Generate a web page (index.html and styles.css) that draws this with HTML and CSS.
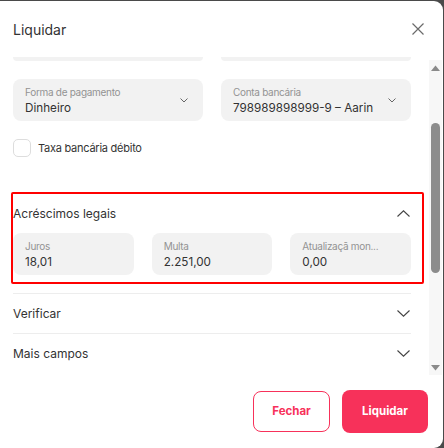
FILE: index.html
```html
<!DOCTYPE html>
<html lang="pt-BR">
<head>
    <meta charset="UTF-8">
    <meta name="viewport" content="width=device-width, initial-scale=1.0">
    <title>Liquidar</title>
    <link rel="stylesheet" href="styles.css">
</head>
<body>
    <div class="modal">
        <div class="modal-header">
            <h2 class="modal-title">Liquidar</h2>
            <button class="close-btn" aria-label="Fechar">
                <svg width="12" height="12" viewBox="0 0 12 12"><path d="M0.5 0.5 L11.5 11.5 M11.5 0.5 L0.5 11.5" stroke="#6b6b6b" stroke-width="1.2" fill="none"/></svg>
            </button>
        </div>

        <div class="modal-body">
            <div class="content">
                <div class="peek">
                    <div class="peek-field"></div>
                    <div class="peek-field"></div>
                </div>

                <div class="row two">
                    <div class="field select">
                        <div class="field-text">
                            <span class="field-label">Forma de pagamento</span>
                            <span class="field-value">Dinheiro</span>
                        </div>
                        <svg class="select-chevron" width="8" height="5" viewBox="0 0 8 5"><path d="M0.5 0.5 L4 4 L7.5 0.5" stroke="#666" stroke-width="1" fill="none"/></svg>
                    </div>
                    <div class="field select">
                        <div class="field-text">
                            <span class="field-label">Conta bancária</span>
                            <span class="field-value">798989898999-9 – Aarin</span>
                        </div>
                        <svg class="select-chevron" width="8" height="5" viewBox="0 0 8 5"><path d="M0.5 0.5 L4 4 L7.5 0.5" stroke="#666" stroke-width="1" fill="none"/></svg>
                    </div>
                </div>

                <label class="checkbox-row">
                    <span class="checkbox"></span>
                    <span class="checkbox-label">Taxa bancária débito</span>
                </label>

                <div class="section highlighted">
                    <div class="section-head">
                        <span class="section-title">Acréscimos legais</span>
                        <svg width="13" height="7" viewBox="0 0 13 7"><path d="M0.5 6.5 L6.5 0.8 L12.5 6.5" stroke="#444" stroke-width="1.1" fill="none"/></svg>
                    </div>
                    <div class="row three">
                        <div class="field">
                            <div class="field-text">
                                <span class="field-label">Juros</span>
                                <span class="field-value">18,01</span>
                            </div>
                        </div>
                        <div class="field">
                            <div class="field-text">
                                <span class="field-label">Multa</span>
                                <span class="field-value">2.251,00</span>
                            </div>
                        </div>
                        <div class="field">
                            <div class="field-text">
                                <span class="field-label">Atualizaçã mon...</span>
                                <span class="field-value">0,00</span>
                            </div>
                        </div>
                    </div>
                </div>

                <div class="accordion">
                    <div class="accordion-item">
                        <span>Verificar</span>
                        <svg width="13" height="7" viewBox="0 0 13 7"><path d="M0.5 0.5 L6.5 6.2 L12.5 0.5" stroke="#444" stroke-width="1.1" fill="none"/></svg>
                    </div>
                    <div class="accordion-item">
                        <span>Mais campos</span>
                        <svg width="13" height="7" viewBox="0 0 13 7"><path d="M0.5 0.5 L6.5 6.2 L12.5 0.5" stroke="#444" stroke-width="1.1" fill="none"/></svg>
                    </div>
                </div>
            </div>

            <div class="scrollbar">
                <svg class="arrow" width="9" height="6" viewBox="0 0 9 6"><path d="M0 6 L4.5 0.5 L9 6 Z" fill="#8a8a8a"/></svg>
                <div class="scroll-track">
                    <div class="scroll-thumb"></div>
                </div>
                <svg class="arrow" width="9" height="6" viewBox="0 0 9 6"><path d="M0 0 L4.5 5.5 L9 0 Z" fill="#8a8a8a"/></svg>
            </div>
        </div>

        <div class="modal-footer">
            <button class="btn btn-outline">Fechar</button>
            <button class="btn btn-primary">Liquidar</button>
        </div>
    </div>
</body>
</html>
```

FILE: styles.css
```css
body {
    margin: 0;
    background-color: #4a4a4a;
    font-family: Inter, "Noto Sans", sans-serif;
    color: #333;
    overflow: hidden;
}
.modal {
    margin-top: 1px;
    width: 443px;
    height: 447px;
    background: #fff;
    border-radius: 0 9px 9px 0;
    display: flex;
    flex-direction: column;
}
.modal-header {
    height: 56px;
    padding: 0 19px 0 13px;
    display: flex;
    align-items: center;
    justify-content: space-between;
    flex-shrink: 0;
}
.modal-title {
    margin: 0;
    font-size: 14px;
    font-weight: 400;
    color: #333;
}
.close-btn {
    background: none;
    border: none;
    padding: 0;
    width: 12px;
    height: 12px;
    display: flex;
}
.modal-body {
    height: 319px;
    display: flex;
    flex-shrink: 0;
}
.content {
    flex: 1;
    padding: 0 18px 0 13px;
    overflow: hidden;
}
.peek {
    display: flex;
    gap: 18px;
    height: 4px;
}
.peek-field {
    flex: 1;
    background: #f2f2f2;
    border-radius: 0 0 8px 8px;
}
.row {
    display: flex;
    gap: 18px;
}
.row.two {
    margin-top: 18px;
}
.field {
    flex: 1;
    height: 42px;
    box-sizing: border-box;
    padding: 7px 12px 0 12px;
    background: #f2f2f2;
    border-radius: 8px;
    display: flex;
    justify-content: space-between;
}
.field.select {
    padding-right: 15px;
}
.field-text {
    display: flex;
    flex-direction: column;
    gap: 2px;
    min-width: 0;
}
.field-label {
    font-size: 10px;
    line-height: 12px;
    color: #929292;
    letter-spacing: -0.3px;
    white-space: nowrap;
}
.field-value {
    font-size: 11.7px;
    line-height: 16px;
    color: #333;
    white-space: nowrap;
}
.select-chevron {
    align-self: center;
    margin-top: -7px;
}
.checkbox-row {
    margin-top: 18px;
    height: 18px;
    display: flex;
    align-items: center;
    gap: 7px;
}
.checkbox {
    width: 16px;
    height: 16px;
    border: 1px solid #ddd;
    border-radius: 5px;
}
.checkbox-label {
    font-size: 11px;
    letter-spacing: -0.25px;
    color: #333;
}
.section {
    margin-top: 35px;
    padding: 1px 0 9px;
    position: relative;
}
.highlighted::after {
    content: "";
    position: absolute;
    top: 0;
    bottom: 0;
    left: -2px;
    right: -13px;
    border: 2px solid #ff0000;
    border-radius: 2px;
    pointer-events: none;
}
.section-head {
    height: 40px;
    display: flex;
    align-items: center;
    justify-content: space-between;
    padding-right: 1px;
}
.section-title {
    font-size: 12px;
    color: #333;
}
.accordion {
    margin-top: 9px;
}
.accordion-item {
    height: 39px;
    border-top: 1px solid #ededed;
    display: flex;
    align-items: center;
    justify-content: space-between;
    font-size: 12px;
    color: #333;
    padding-right: 1px;
}
.scrollbar {
    width: 13px;
    margin: 3px 1px 1px 0;
    background: #f7f7f7;
    display: flex;
    flex-direction: column;
    align-items: center;
}
.arrow {
    margin: 5px 0 4px;
    flex-shrink: 0;
}
.scroll-track {
    flex: 1;
    width: 100%;
    display: flex;
    justify-content: center;
}
.scroll-thumb {
    margin-top: 48px;
    width: 9px;
    height: 150px;
    border-radius: 5px;
    background: #8c8c8c;
}
.modal-footer {
    flex: 1;
    display: flex;
    justify-content: flex-end;
    align-items: center;
    gap: 12px;
    padding: 0 15px 2px 0;
}
.btn {
    font-family: Inter, "Noto Sans", sans-serif;
    font-size: 11.5px;
    font-weight: 700;
    border-radius: 8px;
    cursor: pointer;
}
.btn-outline {
    width: 77px;
    height: 41px;
    background: #fff;
    color: #f7315a;
    border: 1px solid #f7315a;
}
.btn-primary {
    width: 86px;
    height: 43px;
    background: #f7315a;
    color: #fff;
    border: none;
}
```
